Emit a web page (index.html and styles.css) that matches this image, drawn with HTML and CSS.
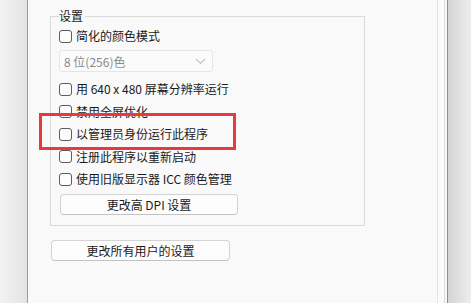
FILE: index.html
```html
<!DOCTYPE html>
<html lang="zh-CN">
<head>
<meta charset="utf-8">
<title>设置</title>
<link rel="stylesheet" href="styles.css">
</head>
<body>
<div class="window">
  <div class="shade-left"></div>
  <div class="panel">
    <div class="group">
      <span class="group-title">设置</span>
      <label class="row first"><span class="box"></span><span>简化的颜色模式</span></label>
      <div class="select"><span>8 位(256)色</span>
        <svg class="chev" width="11" height="7" viewBox="0 0 11 7"><path d="M1 1 L5.5 5.5 L10 1" fill="none" stroke="#c4c4c4" stroke-width="1.2"/></svg>
      </div>
      <label class="row gap"><span class="box"></span><span>用 640 x 480 屏幕分辨率运行</span></label>
      <label class="row"><span class="box"></span><span>禁用全屏优化</span></label>
      <label class="row"><span class="box"></span><span>以管理员身份运行此程序</span></label>
      <label class="row"><span class="box"></span><span>注册此程序以重新启动</span></label>
      <label class="row"><span class="box"></span><span>使用旧版显示器 ICC 颜色管理</span></label>
      <button class="btn dpi">更改高 DPI 设置</button>
    </div>
    <button class="btn all">更改所有用户的设置</button>
    <div class="highlight"></div>
  </div>
  <div class="strip"></div>
  <div class="shade-right"></div>
</div>
</body>
</html>
```

FILE: styles.css
```css
html, body {
  margin: 0;
  padding: 0;
  width: 471px;
  height: 303px;
  overflow: hidden;
  background: #f9f9f9;
}
body {
  font-family: "Noto Sans CJK SC", "Noto Sans", sans-serif;
  font-size: 12px;
  color: #1a1a1a;
}
.window {
  display: flex;
  height: 303px;
}
.shade-left {
  width: 27px;
  background: linear-gradient(to right, #f3f3f3, #e3e3e3);
  border-right: 1px solid #9a9a9a;
}
.panel {
  position: relative;
  width: 409px;
  background: #f9f9f9;
  border-right: 1px solid #e2e2e2;
  display: flex;
  flex-direction: column;
  align-items: flex-start;
}
.strip {
  width: 9px;
  background: #fbfbfb;
  box-shadow: inset -2px 0 0 #f9f9f9, inset -3px 0 0 #dadada;
  border-right: 1px solid #8c8c8c;
}
.shade-right {
  flex: 1;
  background: linear-gradient(to right, #d4d4d4, #eeeeee);
}
.group {
  margin: 16px 0 0 22px;
  width: 297px;
  border: 1px solid #dadada;
  padding: 0 8px 10px 8px;
  display: flex;
  flex-direction: column;
  align-items: flex-start;
}
.group-title {
  display: block;
  margin-top: -8px;
  height: 14px;
  line-height: 14px;
  background: #f9f9f9;
  padding-right: 2px;
}
.row {
  display: flex;
  align-items: center;
  height: 22.5px;
  line-height: 14px;
  white-space: nowrap;
}
.row.first {
  margin-top: 2px;
  height: 22px;
}
.row.gap {
  margin-top: 5.75px;
}
.box {
  width: 11px;
  height: 11px;
  border: 1px solid #5c5c5c;
  border-radius: 3px;
  background: #fdfdfd;
  margin-right: 4px;
  flex: none;
}
.select {
  margin-top: 3px;
  width: 148px;
  height: 20px;
  border: 1px solid #e6e6e6;
  border-radius: 3px;
  background: #fbfbfb;
  color: #8a8a8a;
  display: flex;
  align-items: center;
  justify-content: space-between;
  padding: 0 0 0 4px;
  box-sizing: content-box;
}
.select .chev {
  margin-right: 6px;
}
.btn {
  font-family: "Noto Sans CJK SC", "Noto Sans", sans-serif;
  font-size: 12px;
  color: #1a1a1a;
  background: #fdfdfd;
  border: 1px solid #d3d3d3;
  border-bottom-color: #c2c2c2;
  border-radius: 4px;
  height: 21px;
  padding: 0;
  line-height: 19px;
  text-align: center;
}
.btn.dpi {
  margin-top: 4px;
  margin-left: 1px;
  width: 178px;
}
.btn.all {
  margin: 14px 0 0 23px;
  width: 179px;
}
.highlight {
  position: absolute;
  left: 11px;
  top: 113px;
  width: 191px;
  height: 31px;
  border: 3px solid #e63a3f;
  pointer-events: none;
}
```
